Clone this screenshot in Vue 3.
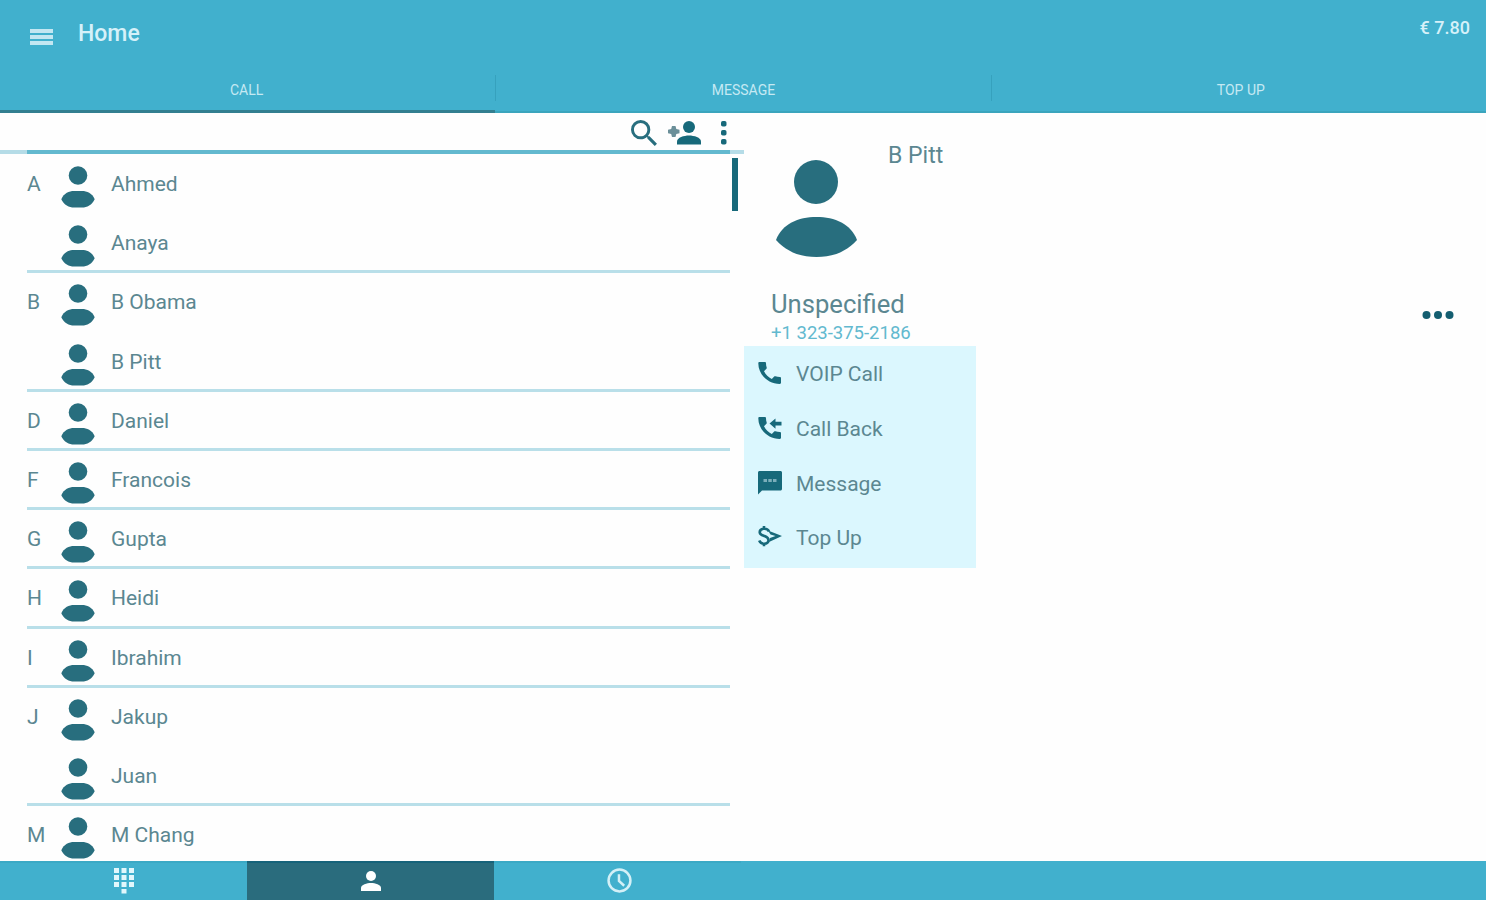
<script setup>
import { ref } from 'vue'

const tabs = ['CALL', 'MESSAGE', 'TOP UP']
const activeTab = ref(0)
const activeNav = ref(1)
const search = ref('')
const balance = ref('€ 7.80')

// last = closes the letter group, so the row gets a divider
const contacts = ref([
  { letter: 'A', name: 'Ahmed' },
  { letter: '', name: 'Anaya', last: true },
  { letter: 'B', name: 'B Obama' },
  { letter: '', name: 'B Pitt', last: true },
  { letter: 'D', name: 'Daniel', last: true },
  { letter: 'F', name: 'Francois', last: true },
  { letter: 'G', name: 'Gupta', last: true },
  { letter: 'H', name: 'Heidi', last: true },
  { letter: 'I', name: 'Ibrahim', last: true },
  { letter: 'J', name: 'Jakup' },
  { letter: '', name: 'Juan', last: true },
  { letter: 'M', name: 'M Chang' }
])

const selected = ref({ name: 'B Pitt', type: 'Unspecified', phone: '+1 323-375-2186' })
</script>

<template>
  <div class="app">
    <header class="header">
      <div class="topbar">
        <svg class="menu-icon" viewBox="0 0 23 18">
          <path d="M0 1h23v4H0zM0 7h23v4H0zM0 13h23v4H0z" />
        </svg>
        <h1 class="title">Home</h1>
        <span class="balance">{{ balance }}</span>
      </div>
      <nav class="tabs">
        <button
          v-for="(tab, i) in tabs"
          :key="tab"
          class="tab"
          :class="{ active: activeTab === i }"
          @click="activeTab = i"
        ><span>{{ tab }}</span></button>
      </nav>
    </header>

    <main class="content">
      <section class="list-panel">
        <div class="search-bar">
          <input v-model="search" class="search-input" type="text" aria-label="Search" />
          <svg class="icon-search" viewBox="3 3 17.5 17.5">
            <path d="M15.5 14h-.79l-.28-.27A6.471 6.471 0 0 0 16 9.5 6.5 6.5 0 1 0 9.5 16c1.61 0 3.09-.59 4.23-1.57l.27.28v.79l5 4.99L20.49 19l-4.99-5zm-6 0C7.01 14 5 11.99 5 9.5S7.01 5 9.5 5 14 7.01 14 9.5 11.99 14 9.5 14z" />
          </svg>
          <svg class="icon-add" viewBox="0 0 33 24">
            <circle cx="21" cy="6" r="6" />
            <path d="M9 23.500v-3c0-4 7-6 12-6s12 2 12 6v3z" />
            <path class="plus" d="M4 5h3.500l.8 3 3.200.8v3.400l-3.200.8-.8 3H4l-.8-3L0 12.200V8.800L3.200 8z" />
          </svg>
          <svg class="icon-more" viewBox="0 0 6 24">
            <rect x="0" y="0" width="5.500" height="5.500" rx="1.800" />
            <rect x="0" y="9" width="5.500" height="5.500" rx="1.800" />
            <rect x="0" y="18" width="5.500" height="5.500" rx="1.800" />
          </svg>
        </div>
        <div class="search-line"></div>
        <div class="scroll-area">
          <ul class="contacts">
            <li v-for="c in contacts" :key="c.name" class="contact" :class="{ last: c.last }">
              <span class="letter">{{ c.letter }}</span>
              <svg class="avatar" viewBox="0 0 34 42">
                <circle cx="17" cy="9.500" r="9.300" />
                <path d="M0.300 33.200C3 27 8 25 13 25h8c5 0 10 2 12.700 8.200C31 39 26 41.500 21 41.500h-8C8 41.500 3 39 0.300 33.200z" />
              </svg>
              <span class="name">{{ c.name }}</span>
            </li>
          </ul>
          <div class="scrollbar"></div>
        </div>
      </section>

      <section class="detail">
        <div class="profile">
          <svg class="profile-avatar" viewBox="0 0 81 98">
            <circle cx="40" cy="22" r="22" />
            <path d="M0 80C6 64 22 57 40.500 57S75 64 81 80C70 92 57 97 40.500 97S11 92 0 80z" />
          </svg>
          <h2 class="profile-name">{{ selected.name }}</h2>
        </div>
        <div class="number">
          <div>
            <div class="number-type">{{ selected.type }}</div>
            <div class="number-phone">{{ selected.phone }}</div>
          </div>
          <svg class="dots" viewBox="0 0 32 10">
            <circle cx="4.500" cy="5" r="4" />
            <circle cx="16" cy="5" r="4" />
            <circle cx="27.500" cy="5" r="4" />
          </svg>
        </div>
        <div class="actions">
          <button class="action">
            <svg viewBox="0 0 24 24">
              <path d="M1.500 1h5.300c.7 0 1.200.5 1.200 1.200 0 1.600.2 3 .7 4.400.1.400 0 .9-.3 1.200L6 10.200c1.800 3.500 4.300 6 7.800 7.800l2.400-2.400c.3-.3.8-.4 1.200-.3 1.400.5 3 .7 4.400.7.700 0 1.200.5 1.200 1.200v4.600c0 .7-.5 1.200-1.200 1.200C10 23 .300 13.500.300 2.200.300 1.500.800 1 1.500 1z" />
            </svg>
            <span>VOIP Call</span>
          </button>
          <button class="action">
            <svg viewBox="0 0 24 24">
              <path d="M1.500 1h5.300c.7 0 1.200.5 1.200 1.200 0 1.600.2 3 .7 4.400.1.400 0 .9-.3 1.200L6 10.200c1.800 3.500 4.300 6 7.800 7.800l2.400-2.400c.3-.3.8-.4 1.200-.3 1.400.5 3 .7 4.400.7.700 0 1.200.5 1.200 1.200v4.600c0 .7-.5 1.200-1.200 1.200C10 23 .300 13.500.300 2.200.300 1.500.800 1 1.500 1z" />
              <path d="M11.500 7.500L17.500 2.500v3.300h6v3.600h-6v3.300z" />
            </svg>
            <span>Call Back</span>
          </button>
          <button class="action">
            <svg viewBox="0 0 24 24">
              <path d="M1.500 0h21c.8 0 1.500.6 1.500 1.500v16.500c0 .9-.7 1.500-1.500 1.500H4L0 23.500V1.500C0 .6.700 0 1.500 0z" />
              <path class="bubble-dots" d="M5.500 8h3.500v3H5.500zM10.300 8h3.500v3h-3.500zM15 8h3.500v3H15z" />
            </svg>
            <span>Message</span>
          </button>
          <button class="action">
            <svg viewBox="0 0 24 24">
              <path class="stroke" d="M11 6.500C10 4 7.500 3.500 5.500 3.800 3 4.200 1.500 5.800 1.800 7.700c.3 2 2.500 2.500 4.700 3.300 2.500.9 4.200 2 4 4.500-.2 2-2 3.200-4.200 3.300C3.500 18.900 2 17.500 1.200 15.500M6 1v3M6 18.500v2.700" />
              <path d="M10 5.500L24 11 11 17 12 13 17.500 11 12.500 9.500z" />
            </svg>
            <span>Top Up</span>
          </button>
        </div>
      </section>
    </main>

    <footer class="bottom-nav">
      <button class="nav-item" :class="{ active: activeNav === 0 }" @click="activeNav = 0">
        <svg class="nav-keypad" viewBox="0 0 20 26">
          <path d="M0 0h5v5H0zM7.500 0h5v5h-5zM15 0h5v5h-5zM0 7h5v5H0zM7.500 7h5v5h-5zM15 7h5v5h-5zM0 14h5v5H0zM7.500 14h5v5h-5zM15 14h5v5h-5zM7.500 21h5v4.500h-5z" />
        </svg>
      </button>
      <button class="nav-item" :class="{ active: activeNav === 1 }" @click="activeNav = 1">
        <svg class="nav-person" viewBox="0 0 20 20">
          <circle cx="10" cy="5" r="5" />
          <path d="M0 20v-3c0-3.500 6-5 10-5s10 1.500 10 5v3z" />
        </svg>
      </button>
      <button class="nav-item" :class="{ active: activeNav === 2 }" @click="activeNav = 2">
        <svg class="nav-clock" viewBox="0 0 24 24">
          <circle cx="12" cy="12" r="10.500" />
          <path d="M11.500 6v6.500l5 4.500" />
        </svg>
      </button>
    </footer>
  </div>
</template>

<style>
body {
  background: #fff;
  overflow: hidden;
}
</style>

<style scoped>
* {
  box-sizing: border-box;
}
.app {
  display: flex;
  flex-direction: column;
  height: 100vh;
  font-family: Roboto, "Liberation Sans", sans-serif;
  color: #5b8791;
  background: #fefefe;
}
button {
  border: none;
  background: none;
  padding: 0;
  font: inherit;
  color: inherit;
  cursor: pointer;
}
h1, h2 {
  margin: 0;
}
svg {
  display: block;
  flex: none;
  fill: #286e7e;
}

.header {
  height: 113px;
  flex: none;
  background: #41b0cd;
  color: #d6f1f9;
}
.topbar {
  display: flex;
  height: 68px;
  padding: 0 16px 0 30px;
}
.menu-icon {
  width: 23px;
  height: 18px;
  margin-top: 28px;
  fill: #c3e7f2;
}
.title {
  margin: 20px auto 0 25px;
  font-size: 23px;
  line-height: 28px;
  font-weight: 500;
}
.balance {
  margin-top: 16px;
  font-size: 18px;
  line-height: 24px;
  font-weight: 500;
}
.tabs {
  display: flex;
  height: 45px;
}
.tab {
  flex: 1;
  display: flex;
  padding-top: 7px;
  border-bottom: 2px solid #3ba5bd;
  font-size: 14px;
  color: #c5e9f3;
}
.tab span {
  flex: 1;
  height: 26px;
  line-height: 30px;
}
.tab:first-child span {
  padding-right: 2px;
}
.tab + .tab span {
  border-left: 1px solid #36a1bd;
}
.tab:last-child span {
  padding-left: 4px;
}
.tab.active {
  border-bottom: 3px solid #337f90;
}

.content {
  display: flex;
  flex: 1;
  min-height: 0;
}
.list-panel {
  display: flex;
  flex-direction: column;
  width: 744px;
}
.search-bar {
  display: flex;
  flex: none;
  align-items: flex-start;
  height: 37px;
  padding: 7px 17px 0 27px;
}
.search-line {
  flex: none;
  height: 4px;
  background: linear-gradient(to right, #b5dce7 27px, #63b9cf 27px, #63b9cf 730px, #b5dce7 730px);
}
.search-input {
  flex: 1;
  height: 26px;
  border: none;
  outline: none;
  background: none;
  font: inherit;
  color: inherit;
}
.icon-search {
  width: 26px;
  height: 26px;
}
.icon-add {
  width: 33px;
  height: 24px;
  margin: 1px 0 0 11px;
  fill: #17697a;
}
.plus {
  fill: #6b8f99;
}
.icon-more {
  width: 6px;
  height: 24px;
  margin: 1px 0 0 20px;
  fill: #17697a;
}
.scroll-area {
  display: flex;
  flex: 1;
  min-height: 0;
  overflow: hidden;
}
.contacts {
  width: 703px;
  margin: 1px 2px 0 27px;
  padding: 0;
  list-style: none;
}
.contact {
  display: flex;
  height: 59.2px;
}
.contact.last {
  border-bottom: 3px solid #b9dfe9;
}
.letter {
  width: 33.5px;
  font-size: 21px;
  line-height: 58px;
}
.avatar {
  width: 34px;
  height: 42px;
  margin-top: 11px;
}
.name {
  margin-left: 16.5px;
  font-size: 21px;
  line-height: 58px;
}
.scrollbar {
  width: 6px;
  height: 53px;
  margin-top: 4px;
  background: #17697a;
}

.detail {
  flex: 1;
  display: flex;
  flex-direction: column;
}
.profile {
  display: flex;
  height: 173px;
  padding: 47px 0 0 32px;
}
.profile-avatar {
  width: 81px;
  height: 98px;
}
.profile-name {
  margin: -18px 0 0 31px;
  font-size: 23px;
  line-height: 28px;
  font-weight: 400;
}
.number {
  display: flex;
  justify-content: space-between;
  height: 60px;
  padding: 2px 32px 0 27px;
}
.number-type {
  font-size: 25.6px;
  line-height: 32px;
}
.number-phone {
  margin-top: 1px;
  font-size: 18.5px;
  line-height: 24px;
  color: #62b9cf;
}
.dots {
  width: 32px;
  height: 10px;
  margin-top: 22px;
  fill: #145e70;
}
.actions {
  display: flex;
  flex-direction: column;
  width: 232px;
  height: 222px;
  background: #dbf7fe;
}
.action {
  display: flex;
  align-items: center;
  height: 54.7px;
  padding-left: 14px;
  font-size: 21px;
}
.action svg {
  width: 24px;
  height: 24px;
  fill: #17697a;
}
.action span {
  margin: 2px 0 0 14px;
}
.action .bubble-dots {
  fill: #7baeba;
}
.action .stroke {
  fill: none;
  stroke: #17697a;
  stroke-width: 2.6;
}

.bottom-nav {
  display: flex;
  flex: none;
  height: 39px;
  background: #41b0cd;
}
.nav-item {
  display: flex;
  justify-content: center;
  width: 247px;
  border-top: 2px solid #3ba9c5;
}
.nav-item.active {
  background: #2a6c7d;
  border-top-color: #17637a;
}
.nav-item svg {
  fill: #e2f7fc;
}
.nav-keypad {
  width: 20px;
  height: 26px;
  margin-top: 5px;
}
.nav-item .nav-person {
  width: 20px;
  height: 20px;
  margin: 8px 0 0 1px;
  fill: #fff;
}
.nav-item .nav-clock {
  width: 25px;
  height: 25px;
  margin: 5px 0 0 3px;
  fill: none;
  stroke: #d3f0f7;
  stroke-width: 2.4;
}
</style>
